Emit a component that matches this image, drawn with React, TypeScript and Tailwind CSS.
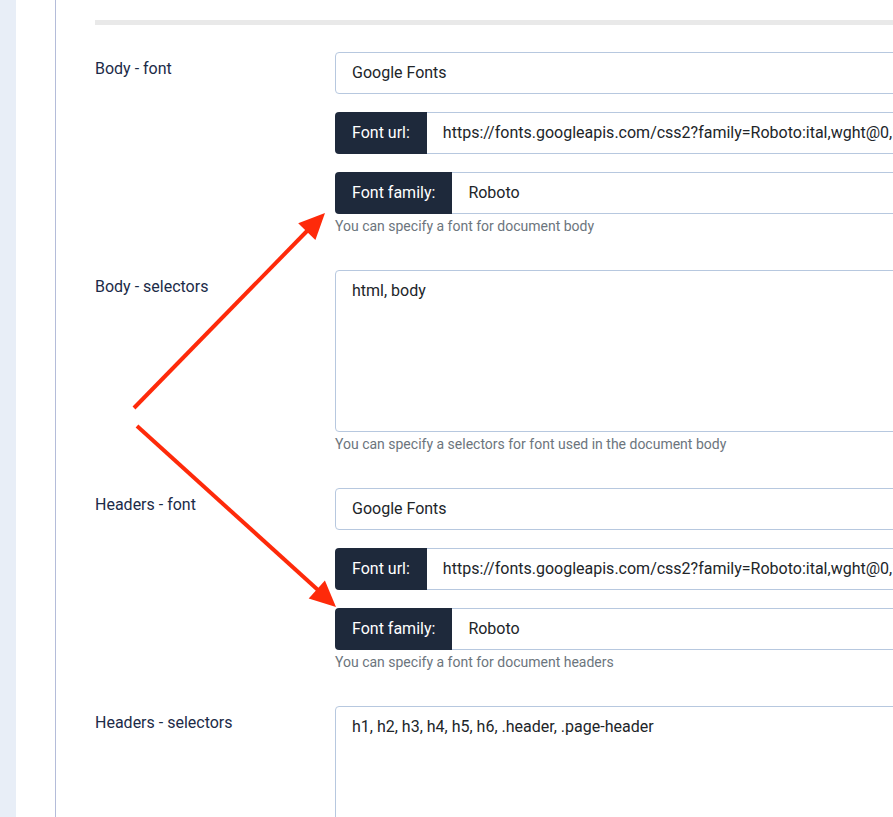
import React from "react";

const font = { fontFamily: "Roboto, 'Noto Sans', sans-serif" };

function Help({ children }: { children: React.ReactNode }) {
  return <div className="mt-[3px] text-[14px] leading-[18px] text-[#6c757d]">{children}</div>;
}

function TextInput({ value }: { value: string }) {
  return (
    <div className="h-[42px] border border-[#b7c8df] rounded-[4px] flex items-center px-[16px] text-[16px] text-[#212529] bg-white">
      {value}
    </div>
  );
}

function Group({ label, value }: { label: string; value: string }) {
  return (
    <div className="h-[42px] flex">
      <div className="h-full bg-[#1e293b] text-white text-[16px] flex items-center px-[17px] rounded-l-[4px] whitespace-nowrap">
        {label}
      </div>
      <div className="flex-1 h-full border border-l-0 border-[#b7c8df] flex items-center pl-[16px] text-[16px] text-[#212529] whitespace-nowrap overflow-hidden">
        {value}
      </div>
    </div>
  );
}

function TextArea({ value }: { value: string }) {
  return (
    <div className="h-[162px] border border-[#b7c8df] rounded-[4px] px-[16px] pt-[8px] text-[16px] leading-[24px] text-[#212529]">
      {value}
    </div>
  );
}

function Row({ label, children }: { label: string; children: React.ReactNode }) {
  return (
    <div className="flex mb-[35px]">
      <div className="w-[240px] shrink-0 pt-[5px] text-[16px] leading-[24px] text-[#1c2b48]">{label}</div>
      <div className="w-[800px] shrink-0 flex flex-col">{children}</div>
    </div>
  );
}

const url = "https://fonts.googleapis.com/css2?family=Roboto:ital,wght@0,100;0,300;0,400;0,500;0,700;0,900;1,100";

export default function App() {
  return (
    <div className="relative w-full h-[817px] overflow-hidden bg-white flex" style={font}>
      <div className="w-[16px] shrink-0 bg-[#e8eef7]" />
      <div className="w-[39px] shrink-0 bg-white" />
      <div className="flex-1 border-l border-[#b4bcd9] pl-[39px] pt-[20px]">
        <div className="h-[5px] bg-[#e9e9e9] w-[1100px]" />
        <div className="pt-[27px]">
          <Row label="Body - font">
            <TextInput value="Google Fonts" />
            <div className="mt-[18px]">
              <Group label="Font url:" value={url} />
            </div>
            <div className="mt-[18px]">
              <Group label="Font family:" value="Roboto" />
            </div>
            <Help>You can specify a font for document body</Help>
          </Row>
          <Row label="Body - selectors">
            <TextArea value="html, body" />
            <Help>You can specify a selectors for font used in the document body</Help>
          </Row>
          <Row label="Headers - font">
            <TextInput value="Google Fonts" />
            <div className="mt-[18px]">
              <Group label="Font url:" value={url} />
            </div>
            <div className="mt-[18px]">
              <Group label="Font family:" value="Roboto" />
            </div>
            <Help>You can specify a font for document headers</Help>
          </Row>
          <Row label="Headers - selectors">
            <TextArea value="h1, h2, h3, h4, h5, h6, .header, .page-header" />
          </Row>
        </div>
      </div>
      <svg
        className="absolute left-0 top-0 pointer-events-none"
        width="893"
        height="817"
        viewBox="0 0 893 817"
      >
        <line x1="134" y1="408" x2="308" y2="230" stroke="#fe2a0a" strokeWidth="4" />
        <polygon points="325,213 315.4,240 298.2,223.2" fill="#fe2a0a" />
        <line x1="137" y1="426" x2="318" y2="590" stroke="#fe2a0a" strokeWidth="4" />
        <polygon points="336,607 308.7,598.4 324.9,580.6" fill="#fe2a0a" />
      </svg>
    </div>
  );
}
